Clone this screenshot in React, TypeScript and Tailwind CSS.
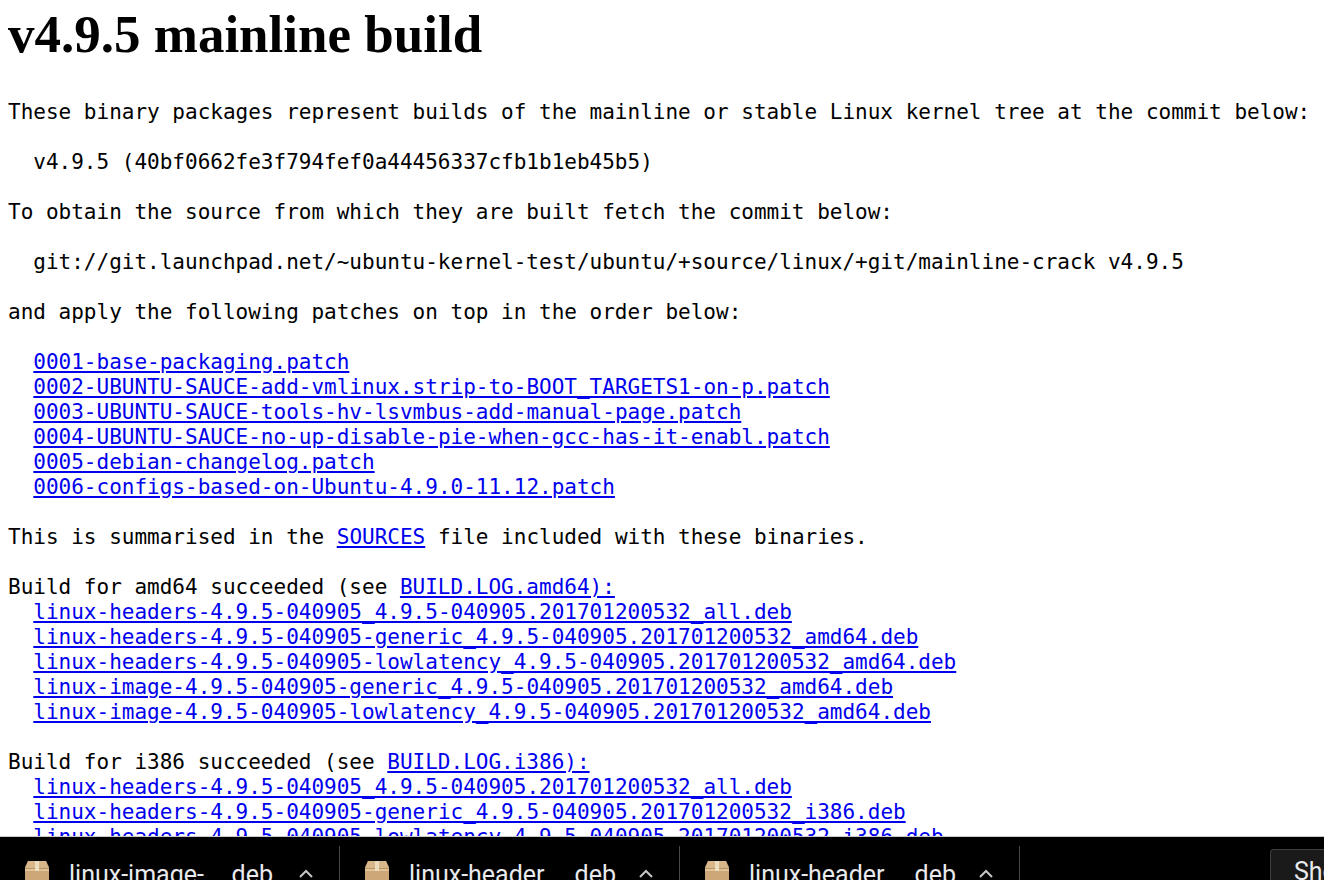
import React from "react"

const mono = "font-['DejaVu_Sans_Mono','Liberation_Mono',monospace] text-[21px] leading-[25px]"
const link = "text-[#0000ee] underline"

const amd64 = [
  "linux-headers-4.9.5-040905_4.9.5-040905.201701200532_all.deb",
  "linux-headers-4.9.5-040905-generic_4.9.5-040905.201701200532_amd64.deb",
  "linux-headers-4.9.5-040905-lowlatency_4.9.5-040905.201701200532_amd64.deb",
  "linux-image-4.9.5-040905-generic_4.9.5-040905.201701200532_amd64.deb",
  "linux-image-4.9.5-040905-lowlatency_4.9.5-040905.201701200532_amd64.deb",
]

const i386 = [
  "linux-headers-4.9.5-040905_4.9.5-040905.201701200532_all.deb",
  "linux-headers-4.9.5-040905-generic_4.9.5-040905.201701200532_i386.deb",
  "linux-headers-4.9.5-040905-lowlatency_4.9.5-040905.201701200532_i386.deb",
]

const patches = [
  "0001-base-packaging.patch",
  "0002-UBUNTU-SAUCE-add-vmlinux.strip-to-BOOT_TARGETS1-on-p.patch",
  "0003-UBUNTU-SAUCE-tools-hv-lsvmbus-add-manual-page.patch",
  "0004-UBUNTU-SAUCE-no-up-disable-pie-when-gcc-has-it-enabl.patch",
  "0005-debian-changelog.patch",
  "0006-configs-based-on-Ubuntu-4.9.0-11.12.patch",
]

function LinkList({ items }: { items: string[] }) {
  return (
    <>
      {items.map((item) => (
        <React.Fragment key={item}>
          {"  "}
          <a className={link} href="#">
            {item}
          </a>
          {"\n"}
        </React.Fragment>
      ))}
    </>
  )
}

function PackageIcon() {
  return (
    <svg width="24" height="24" viewBox="0 0 24 24" className="shrink-0">
      <path d="M3 0h18l3 6v18H0V6z" fill="#cda777" />
      <path d="M3 0h18l2 7H1z" fill="#d8b78b" />
      <path d="M0 7h24v1H0z" fill="#b8925f" />
      <path d="M0 8h24v2H0z" fill="#e0c49c" />
      <path d="M10 0h4v10h-4z" fill="#ecdcc0" />
    </svg>
  )
}

function DownloadItem({ name, ext, wide }: { name: string; ext: string; wide?: boolean }) {
  return (
    <div className="flex w-[340px] shrink-0 items-start border-r border-[#4a4a4a] h-[40px] pl-[25px]">
      <div className="mt-[15px]">
        <PackageIcon />
      </div>
      <div
        className={`ml-[20px] mt-[15px] ${wide ? "w-[207px]" : "w-[204px]"} text-[#e8eaed] text-[25px] leading-[28px] font-['Roboto',sans-serif] whitespace-nowrap flex justify-between`}
      >
        <span>{name}</span>
        <span>{ext}</span>
      </div>
      <svg
        width="16"
        height="10"
        viewBox="0 0 16 10"
        className={`${wide ? "ml-[22px]" : "ml-[25px]"} mt-[22px] shrink-0`}
      >
        <path d="M2 9l6-6 6 6" fill="none" stroke="#c4c7c5" strokeWidth="2" />
      </svg>
    </div>
  )
}

export default function App() {
  return (
    <div className="flex h-[880px] w-[1324px] flex-col overflow-hidden bg-white">
      <div className="min-h-0 flex-1 overflow-hidden pl-2 text-black">
        <h1 className="font-['Liberation_Serif',serif] text-[53px] font-bold leading-[58px] mt-[5px] mb-[37px]">
          v4.9.5 mainline build
        </h1>
        <pre className={mono}>
          {"These binary packages represent builds of the mainline or stable Linux kernel tree at the commit below:\n\n"}
          {"  v4.9.5 (40bf0662fe3f794fef0a44456337cfb1b1eb45b5)\n\n"}
          {"To obtain the source from which they are built fetch the commit below:\n\n"}
          {"  git://git.launchpad.net/~ubuntu-kernel-test/ubuntu/+source/linux/+git/mainline-crack v4.9.5\n\n"}
          {"and apply the following patches on top in the order below:\n\n"}
          <LinkList items={patches} />
          {"\nThis is summarised in the "}
          <a className={link} href="#">SOURCES</a>
          {" file included with these binaries.\n\n"}
          {"Build for amd64 succeeded (see "}
          <a className={link} href="#">BUILD.LOG.amd64):</a>
          {"\n"}
          <LinkList items={amd64} />
          {"\nBuild for i386 succeeded (see "}
          <a className={link} href="#">BUILD.LOG.i386):</a>
          {"\n"}
          <LinkList items={i386} />
        </pre>
      </div>
      <div className="flex h-[44px] shrink-0 items-start overflow-hidden border-t border-[#c9c9c9] bg-black pt-[9px]">
        <DownloadItem name="linux-image-" ext="deb" />
        <DownloadItem name="linux-header" ext="deb" wide />
        <DownloadItem name="linux-header" ext="deb" wide />
        <div className="ml-auto mt-[3px] h-[40px] w-[54px] shrink-0 rounded-tl-[4px] border-l border-t border-[#3c4043] bg-[#1a1a1a] pl-[23px] pt-[8px] text-[25px] leading-[28px] text-[#e8eaed] font-['Roboto',sans-serif] whitespace-nowrap overflow-hidden">
          Show all
        </div>
      </div>
    </div>
  )
}
